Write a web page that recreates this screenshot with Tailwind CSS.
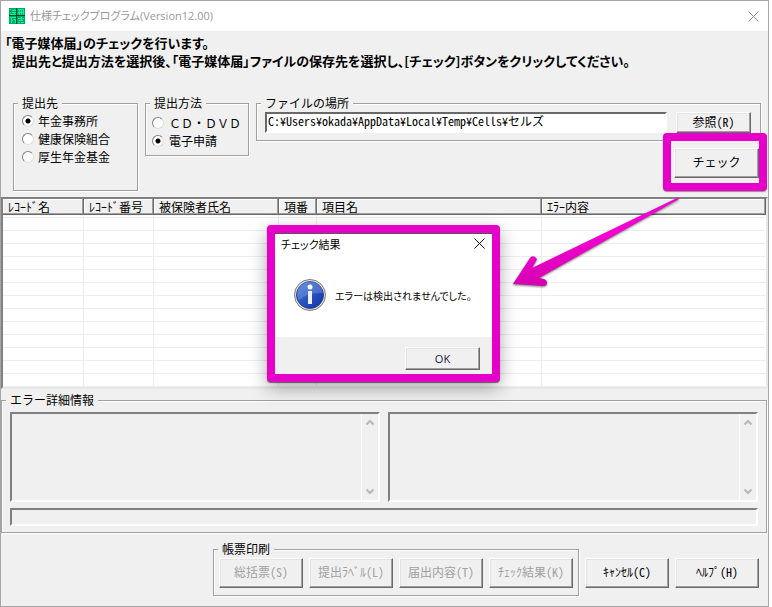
<!DOCTYPE html>
<html lang="ja">
<head>
    <meta charset="UTF-8">
    <meta name="viewport" content="width=device-width, initial-scale=1.0">
    <title>仕様チェックプログラム</title>
    <script src="https://cdn.jsdelivr.net/npm/@tailwindcss/browser@4"></script>
</head>
<body class="bg-white pr-[3px] text-black text-[12px] leading-[14px] font-['Noto_Sans_CJK_JP',sans-serif]">
    <div class="relative min-h-[607px] border border-[#a6a6a6] bg-[#f0f0f0] [font-feature-settings:'hwid']">

        <!-- title bar -->
        <header class="flex h-[30px] items-center bg-white pl-2 pr-[9px] text-[#999] [font-feature-settings:'palt']">
            <svg class="mr-[5px] h-4 w-4" viewBox="0 0 16 16" shape-rendering="crispEdges">
                <rect width="16" height="16" fill="#00a868"/>
                <path d="M0 7.500h16M7.500 0v16" stroke="#004a30"/>
                <path d="M1 1.5h1M3 2.5h4M5 1v2M1 4.5h1M3 4.5h4M5 4v3M1 6.5h6M9 1.5h6M9 4.5h5M10 1v6M14 1v6M12 1v6M1 9.5h6M2 10v5M2 12.5h2M5 11.5h2M6 11v4M9 10.5h6M12 9v4M10 12.5h4M9 14.5h2M12 14.5h3" fill="none" stroke="#00f4a0"/>
            </svg>
            <h1 class="text-[11px] font-['Open_Sans','Noto_Sans_CJK_JP',sans-serif]">仕様チェックプログラム(Version12.00)</h1>
            <button aria-label="閉じる" class="ml-auto">
                <svg class="h-[11px] w-[11px]" viewBox="0 0 11 11"><path d="M.5.5l10 10M10.5.5l-10 10" stroke="#8c8c8c"/></svg>
            </button>
        </header>

        <div class="pl-1 pt-[3px] text-[13px] font-bold leading-[18px] [font-feature-settings:'palt']">
            <p>「電子媒体届」のチェックを行います。</p>
            <p class="pl-[7px]">提出先と提出方法を選択後、「電子媒体届」ファイルの保存先を選択し、[チェック]ボタンをクリックしてください。</p>
        </div>

        <form class="mt-[26px] flex items-start gap-[7px] pl-3 pr-[7px]">
            <fieldset class="h-[95px] w-[125px] border border-[#a0a0a0] px-2 shadow-[1px_1px_0_#fff,inset_1px_1px_0_#fff]">
                <legend class="-ml-1 bg-[#f0f0f0] px-1">提出先</legend>
                <div class="flex flex-col pt-[2px] leading-[18px]">
                    <label class="flex items-center gap-1"><input type="radio" name="dest" checked class="h-3 w-3 appearance-none rounded-full border border-t-[#808080] border-l-[#808080] border-[#ddd] bg-white checked:bg-[radial-gradient(circle,#000_2px,#fff_3px)]">年金事務所</label>
                    <label class="flex items-center gap-1"><input type="radio" name="dest" class="h-3 w-3 appearance-none rounded-full border border-t-[#808080] border-l-[#808080] border-[#ddd] bg-white checked:bg-[radial-gradient(circle,#000_2px,#fff_3px)]">健康保険組合</label>
                    <label class="flex items-center gap-1"><input type="radio" name="dest" class="h-3 w-3 appearance-none rounded-full border border-t-[#808080] border-l-[#808080] border-[#ddd] bg-white checked:bg-[radial-gradient(circle,#000_2px,#fff_3px)]">厚生年金基金</label>
                </div>
            </fieldset>
            <fieldset class="h-[60px] w-[104px] border border-[#a0a0a0] px-[6px] shadow-[1px_1px_0_#fff,inset_1px_1px_0_#fff]">
                <legend class="-ml-[2px] bg-[#f0f0f0] px-1">提出方法</legend>
                <div class="flex flex-col pt-1 leading-[18px] [font-feature-settings:normal]">
                    <label class="flex items-center gap-[5px] whitespace-nowrap"><input type="radio" name="method" class="h-3 w-3 appearance-none rounded-full border border-t-[#808080] border-l-[#808080] border-[#ddd] bg-white checked:bg-[radial-gradient(circle,#000_2px,#fff_3px)]">ＣＤ・ＤＶＤ</label>
                    <label class="flex items-center gap-[5px] whitespace-nowrap"><input type="radio" name="method" checked class="h-3 w-3 appearance-none rounded-full border border-t-[#808080] border-l-[#808080] border-[#ddd] bg-white checked:bg-[radial-gradient(circle,#000_2px,#fff_3px)]">電子申請</label>
                </div>
            </fieldset>
            <div class="flex min-w-0 flex-1 flex-col">
                <fieldset class="h-[45px] border border-[#a0a0a0] pl-2 pr-[9px] shadow-[1px_1px_0_#fff,inset_1px_1px_0_#fff]">
                    <legend class="-ml-1 bg-[#f0f0f0] px-1">ファイルの場所</legend>
                    <div class="flex gap-[9px] pt-[2px]">
                        <input type="text" aria-label="ファイルの場所" value="C:¥Users¥okada¥AppData¥Local¥Temp¥Cells¥セルズ" class="h-[21px] min-w-0 flex-1 border-2 border-t-[#696969] border-l-[#696969] border-b-white border-r-white bg-white px-px pb-1">
                        <button type="button" class="h-[21px] w-[75px] border border-t-white border-l-white border-r-[#696969] border-b-[#696969] pb-[2px] shadow-[inset_-1px_-1px_0_#a0a0a0,inset_1px_1px_0_#e3e3e3]">参照(R)</button>
                    </div>
                </fieldset>
                <!-- highlighted button -->
                <div class="relative z-10 -mt-2 -mr-[6px] self-end rounded-[4px] border-8 border-[#e600c8] bg-[#f0f0f0] pl-[3px] pt-[7px] pb-[5px] shadow-[0_1px_1px_#0006]">
                    <button type="button" class="block h-[30px] w-[85px] border border-t-white border-l-white border-r-[#696969] border-b-[#696969] pb-[2px] shadow-[inset_-1px_-1px_0_#a0a0a0,inset_1px_1px_0_#e3e3e3]">チェック</button>
                </div>
            </div>
        </form>

        <!-- result list -->
        <div class="mt-[6px] border-2 border-t-[#808080] border-l-[#808080] border-b-[#e8e8e8] border-r-[#e8e8e8] bg-white">
            <table class="w-full table-fixed border-separate border-spacing-0 text-left">
                <colgroup>
                    <col class="w-[81px]"><col class="w-[70px]"><col class="w-[125px]"><col class="w-[38px]"><col class="w-[225px]"><col>
                </colgroup>
                <thead class="bg-[#f0f0f0] leading-[14px]">
                    <tr>
                        <th class="h-4 border-r border-b border-[#696969] p-0 pl-[5px] font-normal shadow-[inset_-1px_-1px_0_#a0a0a0,inset_1px_1px_0_#fff]">ﾚｺｰﾄﾞ名</th>
                        <th class="border-r border-b border-[#696969] p-0 pl-[5px] font-normal shadow-[inset_-1px_-1px_0_#a0a0a0,inset_1px_1px_0_#fff]">ﾚｺｰﾄﾞ番号</th>
                        <th class="border-r border-b border-[#696969] p-0 pl-[5px] font-normal shadow-[inset_-1px_-1px_0_#a0a0a0,inset_1px_1px_0_#fff]">被保険者氏名</th>
                        <th class="border-r border-b border-[#696969] p-0 pl-[5px] font-normal shadow-[inset_-1px_-1px_0_#a0a0a0,inset_1px_1px_0_#fff]">項番</th>
                        <th class="border-r border-b border-[#696969] p-0 pl-[5px] font-normal shadow-[inset_-1px_-1px_0_#a0a0a0,inset_1px_1px_0_#fff]">項目名</th>
                        <th class="border-r border-b border-[#696969] p-0 pl-[5px] font-normal shadow-[inset_-1px_-1px_0_#a0a0a0,inset_1px_1px_0_#fff]">ｴﾗｰ内容</th>
                    </tr>
                </thead>
                <tbody id="rows"></tbody>
            </table>
        </div>

        <fieldset class="mt-1 mr-px h-[140px] border border-[#a0a0a0] px-2 shadow-[1px_1px_0_#fff,inset_1px_1px_0_#fff]">
            <legend class="-ml-1 bg-[#f0f0f0] px-1">エラー詳細情報</legend>
            <div class="flex gap-2 pt-[5px]">
                <div class="flex h-[90px] flex-1 border-2 border-t-[#808080] border-l-[#808080] border-b-white border-r-white">
                    <textarea readonly aria-label="エラー詳細" class="min-w-0 flex-1 resize-none"></textarea>
                    <div class="flex w-[17px] flex-col items-center justify-between border-l border-white py-[5px]">
                        <svg class="h-[7px] w-2" viewBox="0 0 8 7"><path d="M.5 5.500 4 2l3.500 3.500" fill="none" stroke="#b8b8b8" stroke-width="2"/></svg>
                        <svg class="h-[7px] w-2" viewBox="0 0 8 7"><path d="M.5 1.500 4 5l3.500-3.500" fill="none" stroke="#b8b8b8" stroke-width="2"/></svg>
                    </div>
                </div>
                <div class="flex h-[90px] flex-1 border-2 border-t-[#808080] border-l-[#808080] border-b-white border-r-white">
                    <textarea readonly aria-label="エラー詳細2" class="min-w-0 flex-1 resize-none"></textarea>
                    <div class="flex w-[17px] flex-col items-center justify-between border-l border-white py-[5px]">
                        <svg class="h-[7px] w-2" viewBox="0 0 8 7"><path d="M.5 5.500 4 2l3.500 3.500" fill="none" stroke="#b8b8b8" stroke-width="2"/></svg>
                        <svg class="h-[7px] w-2" viewBox="0 0 8 7"><path d="M.5 1.500 4 5l3.500-3.500" fill="none" stroke="#b8b8b8" stroke-width="2"/></svg>
                    </div>
                </div>
            </div>
            <input type="text" readonly aria-label="状態" class="mt-[6px] block h-[18px] w-full border-2 border-t-[#808080] border-l-[#808080] border-b-white border-r-white">
        </fieldset>

        <div class="mt-[9px] flex items-end justify-end pr-[9px]">
            <fieldset class="h-[54px] border border-[#a0a0a0] px-[5px] shadow-[1px_1px_0_#fff,inset_1px_1px_0_#fff]">
                <legend class="-ml-px bg-[#f0f0f0] px-1">帳票印刷</legend>
                <div class="flex gap-[6px] pt-[2px] text-[#a0a0a0] [text-shadow:1px_1px_0_#fff]">
                    <button disabled class="h-[30px] w-[84px] border border-t-white border-l-white border-r-[#696969] border-b-[#696969] pb-[2px] shadow-[inset_-1px_-1px_0_#a0a0a0,inset_1px_1px_0_#e3e3e3]">総括票(S)</button>
                    <button disabled class="h-[30px] w-[84px] border border-t-white border-l-white border-r-[#696969] border-b-[#696969] pb-[2px] shadow-[inset_-1px_-1px_0_#a0a0a0,inset_1px_1px_0_#e3e3e3]">提出ﾗﾍﾞﾙ(L)</button>
                    <button disabled class="h-[30px] w-[84px] border border-t-white border-l-white border-r-[#696969] border-b-[#696969] pb-[2px] shadow-[inset_-1px_-1px_0_#a0a0a0,inset_1px_1px_0_#e3e3e3]">届出内容(T)</button>
                    <button disabled class="h-[30px] w-[84px] border border-t-white border-l-white border-r-[#696969] border-b-[#696969] pb-[2px] shadow-[inset_-1px_-1px_0_#a0a0a0,inset_1px_1px_0_#e3e3e3]">ﾁｪｯｸ結果(K)</button>
                </div>
            </fieldset>
            <div class="mb-2 ml-[6px] flex gap-[6px]">
                <button class="h-[30px] w-[84px] border border-t-white border-l-white border-r-[#696969] border-b-[#696969] pb-[2px] shadow-[inset_-1px_-1px_0_#a0a0a0,inset_1px_1px_0_#e3e3e3]">ｷｬﾝｾﾙ(C)</button>
                <button class="h-[30px] w-[84px] border border-t-white border-l-white border-r-[#696969] border-b-[#696969] pb-[2px] shadow-[inset_-1px_-1px_0_#a0a0a0,inset_1px_1px_0_#e3e3e3]">ﾍﾙﾌﾟ(H)</button>
            </div>
        </div>

        <!-- arrow from button to dialog -->
        <svg class="pointer-events-none absolute top-[191px] left-[507px] z-20 h-[100px] w-[180px] drop-shadow-[0_1px_1px_#0008]" viewBox="0 0 180 100">
            <defs>
                <linearGradient id="pink" x1="0" y1="0" x2="0.2" y2="1">
                    <stop offset="0.5" stop-color="#f400d2"/>
                    <stop offset="1" stop-color="#d400b0"/>
                </linearGradient>
            </defs>
            <path d="M5 92 22 66q2-3 5-1t1 4l-4 7L169 6q2-1 2 1L31 86l5 1q3 1 3 4t-4 3z" fill="url(#pink)"/>
        </svg>

        <!-- message box -->
        <div role="dialog" aria-labelledby="dlg-title" class="absolute top-[224px] left-[266px] z-20 w-[233px] rounded-[4px] border-8 border-[#e600c8] bg-white shadow-[0_1px_1px_#0008,0_6px_18px_#0005] [font-feature-settings:'palt']">
            <div class="flex h-5 items-center justify-between border-t border-[#555] pl-[6px] pr-[7px]">
                <h2 id="dlg-title" class="text-[11px]">チェック結果</h2>
                <button aria-label="閉じる"><svg class="h-[11px] w-[11px]" viewBox="0 0 11 11"><path d="M.5.5l10 10M10.5.5l-10 10" stroke="#111"/></svg></button>
            </div>
            <div class="flex h-[84px] items-center gap-[9px] pl-[19px]">
                <svg class="h-8 w-8 shrink-0" viewBox="0 0 32 32">
                    <defs>
                        <linearGradient id="blue" x1="0" y1="0" x2="1" y2="1">
                            <stop offset="0" stop-color="#3f78dc"/>
                            <stop offset="1" stop-color="#1230a8"/>
                        </linearGradient>
                    </defs>
                    <circle cx="16" cy="16" r="15.500" fill="#e4e4e4" stroke="#7c7c7c"/>
                    <circle cx="16" cy="16" r="13.500" fill="url(#blue)" stroke="#27408c"/>
                    <path d="M3 16a13 13 0 0 1 26-2Q14 13 5 21a13 13 0 0 1-2-5z" fill="#fff" opacity=".18"/>
                    <circle cx="16" cy="8" r="2.500" fill="#fff"/>
                    <path d="M14 12h4v13h-4z" fill="#f0f0f0"/>
                </svg>
                <p class="whitespace-nowrap pt-[2px] text-[10px]">エラーは検出されませんでした。</p>
            </div>
            <div class="flex h-[37px] items-center justify-end bg-[#f0f0f0] pr-3 pt-[6px]">
                <button class="h-[23px] w-[75px] border border-t-white border-l-white border-r-[#696969] border-b-[#696969] font-['Open_Sans',sans-serif] text-[11px] text-[#1a1a3c] shadow-[inset_-1px_-1px_0_#a0a0a0,inset_1px_1px_0_#e3e3e3]">OK</button>
            </div>
        </div>
    </div>

    <script>
        const rows = document.getElementById("rows");
        for (let i = 0; i < 14; i++) {
            const tr = document.createElement("tr");
            // first row is only a sliver under the header
            const height = i === 0 ? "h-[3px]" : "h-[13px]";
            for (let c = 0; c < 6; c++) {
                const td = document.createElement("td");
                td.className = height + (c < 5 ? " border-r" : "") + " border-b border-[#ededed] p-0";
                tr.appendChild(td);
            }
            rows.appendChild(tr);
        }
    </script>
</body>
</html>
